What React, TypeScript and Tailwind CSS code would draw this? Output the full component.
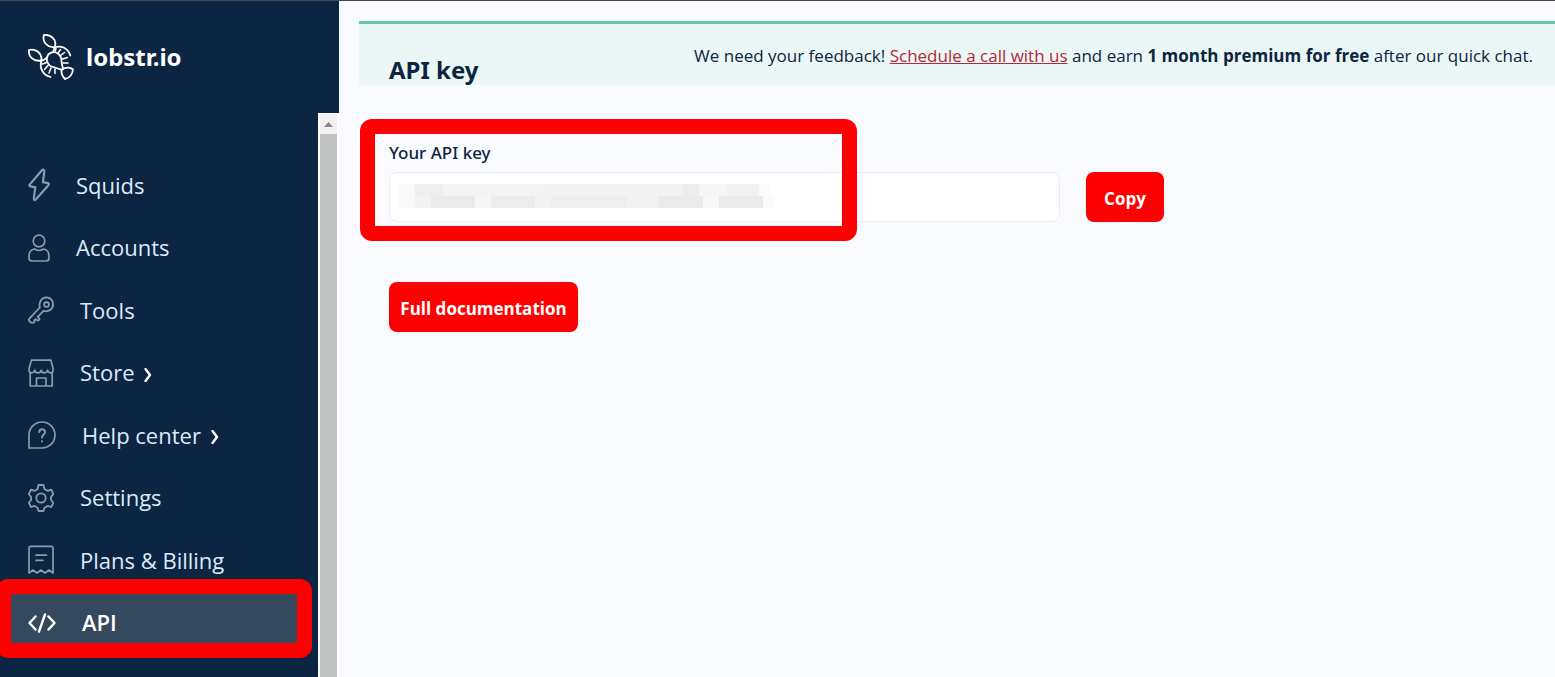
import type { ReactNode } from "react";

type NavItem = {
  label: string;
  href: string;
  icon: ReactNode;
  expandable?: boolean;
  active?: boolean;
};

const ICON_PROPS = {
  fill: "none",
  stroke: "currentColor",
  strokeLinecap: "round",
  strokeLinejoin: "round",
  "aria-hidden": true
} as const;

const NAV_ITEMS: NavItem[] = [
  {
    label: "Squids",
    href: "#squids",
    icon: (
      <svg {...ICON_PROPS} width="22" height="34" viewBox="0 0 22 34" strokeWidth="2.2">
        <path d="M14 2.2 1.8 16.4c-.8 1-.5 1.8.6 2l4.9 1-1.5 11.3c0 1.5 1.200 1.700 2 .7L20.400 17.200c.8-1 .5-1.800-.6-2l-4.900-1 1.500-11C16.400 1.700 15 1.200 14 2.200Z" />
      </svg>
    )
  },
  {
    label: "Accounts",
    href: "#accounts",
    icon: (
      <svg {...ICON_PROPS} width="22" height="28" viewBox="0 0 22 28" strokeWidth="1.7">
        <circle cx="11" cy="7" r="5.8" />
        <path d="M6.5 15C3 15.5 1 18.5 1 22.5V24c0 2 1 3 3 3h14c2 0 3-1 3-3v-1.5c0-4-2-7-5.5-7.5-3 2-6 2-9 0Z" />
      </svg>
    )
  },
  {
    label: "Tools",
    href: "#tools",
    icon: (
      <svg {...ICON_PROPS} width="26" height="28" viewBox="0 0 26 28" strokeWidth="1.8">
        <circle cx="18.5" cy="8.5" r="2.4" />
        <path d="M11.8 11.5C10.5 6.5 13.5 1.4 18.5 1.4c3.8 0 6.6 3 6.6 6.8 0 5-4.8 8.2-9.6 6.7l-5.7 6 1.5 1.8c.5 1-.8 2.2-1.9 1.7l-1.7-1.1-1.4 1.2.2 1.5C5.5 27.3 3.5 27 2.6 26.2 1 25 .6 23.6 1.2 22.8Z" />
      </svg>
    )
  },
  {
    label: "Store",
    href: "#store",
    expandable: true,
    icon: (
      <svg {...ICON_PROPS} width="26" height="28" viewBox="0 0 26 28" strokeWidth="1.7">
        <path d="M2.2 13.5V27h22V13.5M8.5 27v-8H18v8" />
        <path d="M3.5 1.2h19.3l2.3 8.3V11c0 3.7-5 3.7-5.5.2-.7 3.5-5.5 3.5-6.400 0-.9 3.500-5.700 3.500-6.500 0C6 14.700 1 14.700 1 11V9.500Z" />
      </svg>
    )
  },
  {
    label: "Help center",
    href: "#help",
    expandable: true,
    icon: (
      <svg {...ICON_PROPS} width="28" height="28" viewBox="0 0 28 28" strokeWidth="1.7">
        <path d="M1 27V14A13 13 0 1 1 14 27Z" />
        <path d="M11.3 11c0-3.6 5.800-3.600 5.800 0 0 2.400-3.100 2.600-3.100 5.400M14 20.200v.4" strokeWidth="2" />
      </svg>
    )
  },
  {
    label: "Settings",
    href: "#settings",
    icon: (
      <svg {...ICON_PROPS} width="26" height="28" viewBox="0 0 26 28" strokeWidth="1.8">
        <circle cx="13" cy="14" r="4.7" />
        <path d="M10.5 1h5l.9 4 3.3 1.9 3.7-1.200 1.900 4.400-2.300 2.700v3l2.300 3-2.100 4.200-3.500-1.100-3.200 1.900-1 3.200h-4.900l-1-3.200-3.200-1.900-3.500 1.100L.9 18.800l2.200-2.800v-3L.9 10.200l2-4.500 3.600 1.200L9.700 5Z" />
      </svg>
    )
  },
  {
    label: "Plans & Billing",
    href: "#billing",
    icon: (
      <svg {...ICON_PROPS} width="26" height="30" viewBox="0 0 26 30" strokeWidth="1.7">
        <path d="M1 28V3c0-1 .7-1.7 1.700-1.700h20.600c1 0 1.700.7 1.700 1.700v25l-4-3-4 3-4-3-4 3-4-3ZM8 10.200h10.500M8 15.300h7" />
      </svg>
    )
  },
  {
    label: "API",
    href: "#api",
    active: true,
    icon: (
      <svg {...ICON_PROPS} width="28" height="20" viewBox="0 0 28 20" strokeWidth="2.4">
        <path d="m7.5 3.5-6 6.5 6 6.5M20.500 3.500l6 6.500-6 6.500M17 1.500l-6 17" />
      </svg>
    )
  }
];

// Widths and shades of the blocks that hide the key
const MASK_ROWS = [
  ["w-4 bg-[#f9f9fa]", "w-7 bg-[#eeeeef]", "w-24 bg-[#f4f4f5]", "w-36 bg-[#f3f3f4]", "w-4 bg-[#ededee]", "w-7 bg-[#f6f6f7]", "w-8 bg-[#f1f1f2]", "w-3 bg-[#fbfbfc]"],
  ["w-4 bg-[#f9f9fa]", "w-4 bg-[#f3f3f4]", "w-11 bg-[#ebebec]", "w-4 bg-[#f6f6f7]", "w-11 bg-[#ececed]", "w-4 bg-[#f3f3f4]", "w-19 bg-[#eeeeef]", "w-8 bg-[#f2f2f3]", "w-11 bg-[#ebebec]", "w-4 bg-[#f8f8f9]", "w-11 bg-[#ebebec]", "w-3 bg-[#fbfbfc]"]
];

function Logo() {
  return (
    <svg width="46" height="46" viewBox="0 0 46 46" fill="none" stroke="#fff" strokeWidth="1.8" strokeLinecap="round" strokeLinejoin="round" aria-hidden="true">
      {/* Claws */}
      <path d="M16 1C22 .5 30 5 26.500 13.500 18 13 14 7 16 1ZM1 16c6-1.500 13 2 12.500 10.500C5 28 0 22 1 16Z" />
      {/* Shell arcs */}
      <path d="M26.500 13.500C33 11 40 14 42.300 21.500M13.500 26.500C11 34 15 41 22.500 43" />
      <path d="M26.500 13.500c-.5 4-3 6-6 6.500-1 3.500-3.500 6-7 6.500M20 21c-3 5 0 12 7 12.500l7 2.500M22 19c6-3 12 2 11.500 9L35 35" />
      {/* Legs */}
      <path d="m27 17.500 1-3M30 19l2.500-3.500M32.500 21.500l4-3M34.500 25l5-1.500M35 29h5M18.500 28.500 14.500 30M20 31.500l-3.500 4M23 34l-2 5M27 35v4.500" strokeWidth="1.5" />
      {/* Tail */}
      <path d="M33.500 35.500c4-2.500 9-2.500 11.500 0-.5 4.500-3.500 8.500-8 9.500-2.500-2.500-4-6-3.500-9.500Z" />
    </svg>
  );
}

export default function App() {
  return (
    <div className="flex h-screen overflow-hidden border-t border-[#474650] bg-[#fafbff] font-['Open_Sans','Noto_Sans',sans-serif] text-[#0c2540]">
      {/* Sidebar */}
      <aside className="flex w-[339px] shrink-0 flex-col bg-[#0b2542]">
        <a href="#home" className="flex h-28 shrink-0 items-center gap-3 px-7 font-['Noto_Sans',sans-serif] text-2xl font-bold text-white">
          <Logo />
          lobstr.io
        </a>

        <div className="flex min-h-0 flex-1">
          <nav className="grid h-[541px] flex-1 grid-rows-8 pt-[41px]">
            {NAV_ITEMS.map((item) => (
              <a
                key={item.label}
                href={item.href}
                className={`relative flex items-center pl-7 ${
                  item.active ? "font-semibold text-white" : "text-[#879bb4]"
                }`}
              >
                {item.active && (
                  <span className="absolute -top-[13px] right-1.5 -left-1 h-[79px] rounded-xl border-[15px] border-[#ff0000] bg-[#34495d]" />
                )}
                <span className="relative">{item.icon}</span>
                <span className={`relative ml-[26px] text-[22px] ${item.active ? "" : "text-[#dceafa]"}`}>
                  {item.label}
                </span>
                {item.expandable && (
                  <svg {...ICON_PROPS} className="mt-1 ml-2.5 text-white" width="8" height="14" viewBox="0 0 8 14" strokeWidth="2.4">
                    <path d="m1.5 1 4.500 6-4.500 6" />
                  </svg>
                )}
              </a>
            ))}
          </nav>

          {/* Scrollbar */}
          <div className="flex w-[21px] flex-col border-x-2 border-t border-white bg-[#f1f1f1]">
            <div className="flex h-5 items-center justify-center">
              <svg width="9" height="5" viewBox="0 0 9 5" aria-hidden="true">
                <path d="M0 5 4.5 0 9 5Z" fill="#878787" />
              </svg>
            </div>
            <div className="flex-1 bg-[#c1c2c2]" />
          </div>
        </div>
      </aside>

      {/* Main content */}
      <main className="min-w-0 flex-1 pt-5 pl-5">
        <header className="flex h-16 justify-between border-t-3 border-[#62cba2] bg-[#ebf7f6] pr-[22px] pl-[30px]">
          <h1 className="mt-7 font-['Noto_Sans',sans-serif] text-2xl leading-9 font-bold">API key</h1>
          <p className="mt-4 text-[17px] leading-8">
            We need your feedback!{" "}
            <a href="#schedule" className="text-[#b22a35] underline">
              Schedule a call with us
            </a>{" "}
            and earn <strong>1 month premium for free</strong> after our quick chat.
          </p>
        </header>

        <section className="pt-14 pl-[30px]">
          <label htmlFor="api-key" className="block font-['Noto_Sans',sans-serif] text-[17px] leading-6 font-medium">
            Your API key
          </label>
          <div className="mt-[7px] flex gap-[26px]">
            <div className="relative w-[671px]">
              <input
                id="api-key"
                type="text"
                readOnly
                className="h-[50px] w-full rounded-lg border border-[#ebecf1] bg-white px-3"
              />
              <div className="pointer-events-none absolute top-3 left-2.5">
                {MASK_ROWS.map((row, i) => (
                  <div key={i} className="flex h-3">
                    {row.map((block, j) => (
                      <span key={j} className={block} />
                    ))}
                  </div>
                ))}
              </div>
              <div className="pointer-events-none absolute -top-[53px] -left-[29px] h-[122px] w-[497px] rounded-xl border-[15px] border-[#ff0000]" />
            </div>
            <button type="button" className="h-[50px] w-[78px] rounded-lg bg-[#ff0000] pt-1 text-[17px] font-bold text-white">
              Copy
            </button>
          </div>
          <a
            href="#documentation"
            className="mt-[60px] flex h-[50px] w-[189px] items-center justify-center rounded-lg bg-[#ff0000] pt-1 text-[17px] font-bold text-white"
          >
            Full documentation
          </a>
        </section>
      </main>
    </div>
  );
}
